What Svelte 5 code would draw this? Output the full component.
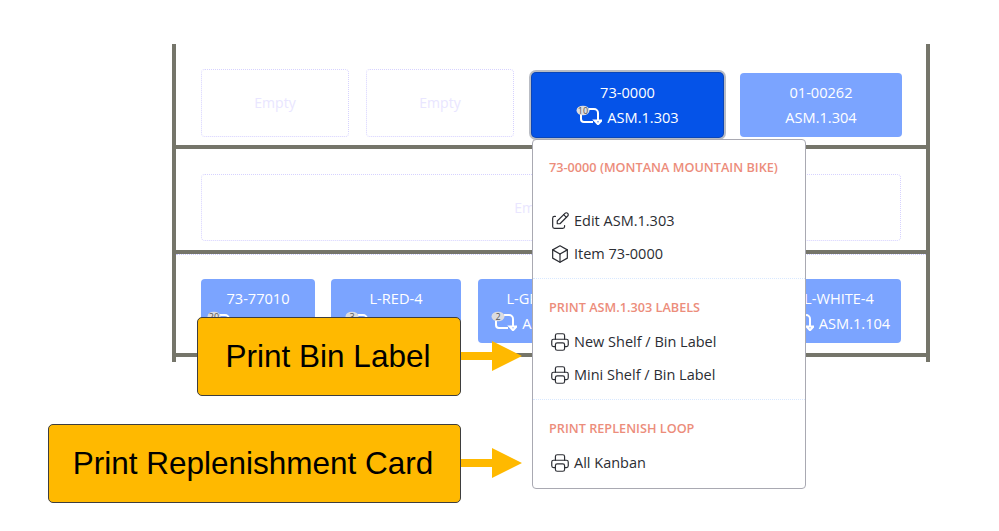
<script>
	const bottomRow = [
		{ sku: '73-77010', bin: 'ASM.1.101', count: 20 },
		{ sku: 'L-RED-4', bin: 'ASM.1.102', count: 3 },
		{ sku: 'L-GREEN-4', bin: 'ASM.1.103', count: 2 },
		{ sku: 'L-WHITE-4', bin: 'ASM.1.104', count: 6 }
	];
</script>

{#snippet loop(count)}
	<svg class="loop" viewBox="0 0 26 20" aria-hidden="true">
		<path d="M5 9v5a3 3 0 0 0 3 3h9" />
		<path d="M13 4h5a4 4 0 0 1 4 4v8" />
		<path d="M18.500 15.500h7l-3.500 3.800z" />
		<ellipse class="badge" cx="7" cy="5.500" rx="6.500" ry="4.800" />
		<text x="7" y="8.700">{count}</text>
	</svg>
{/snippet}

{#snippet printer()}
	<svg class="ico" viewBox="0 0 24 24" aria-hidden="true">
		<path d="M17 17h2a2 2 0 0 0 2 -2v-4a2 2 0 0 0 -2 -2h-14a2 2 0 0 0 -2 2v4a2 2 0 0 0 2 2h2" />
		<path d="M17 9v-4a2 2 0 0 0 -2 -2h-6a2 2 0 0 0 -2 2v4" />
		<path d="M7 15a2 2 0 0 1 2 -2h6a2 2 0 0 1 2 2v4a2 2 0 0 1 -2 2h-6a2 2 0 0 1 -2 -2z" />
	</svg>
{/snippet}

<main class="page">
	<div class="rack">
		<div class="shelf top">
			<div class="slot">Empty</div>
			<div class="slot">Empty</div>
			<div class="card active">
				<span>73-0000</span>
				<span class="bin">{@render loop(10)} ASM.1.303</span>
			</div>
			<div class="card">
				<span>01-00262</span>
				<span class="bin">ASM.1.304</span>
			</div>
		</div>
		<div class="shelf middle">
			<div class="slot">Empty</div>
		</div>
		<div class="shelf bottom">
			{#each bottomRow as item}
				<div class="card">
					<span>{item.sku}</span>
					<span class="bin">{@render loop(item.count)} {item.bin}</span>
				</div>
			{/each}
		</div>
	</div>

	<div class="menu">
		<section class="first">
			<h4>73-0000 (Montana Mountain Bike)</h4>
			<div class="item">
				<svg class="ico" viewBox="0 0 24 24" aria-hidden="true">
					<path d="M7 7h-1a2 2 0 0 0 -2 2v9a2 2 0 0 0 2 2h9a2 2 0 0 0 2 -2v-1" />
					<path d="M20.385 6.585a2.100 2.100 0 0 0 -2.970 -2.970l-8.415 8.385v3h3l8.385 -8.415z" />
					<path d="M16 5l3 3" />
				</svg>
				Edit ASM.1.303
			</div>
			<div class="item">
				<svg class="ico" viewBox="0 0 24 24" aria-hidden="true">
					<path d="M12 3l8 4.500v9l-8 4.500l-8 -4.500v-9z" />
					<path d="M12 12l8 -4.500" />
					<path d="M12 12v9" />
					<path d="M12 12l-8 -4.500" />
				</svg>
				Item 73-0000
			</div>
		</section>
		<section>
			<h4>Print ASM.1.303 Labels</h4>
			<div class="item">{@render printer()} New Shelf / Bin Label</div>
			<div class="item">{@render printer()} Mini Shelf / Bin Label</div>
		</section>
		<section>
			<h4>Print Replenish Loop</h4>
			<div class="item">{@render printer()} All Kanban</div>
		</section>
	</div>

	<div class="callout bin-label">Print Bin Label</div>
	<svg class="arrow arrow-bin" viewBox="0 0 61 30" aria-hidden="true"><path d="M0 11h31v-11l30 15l-30 15v-11h-31z" /></svg>

	<div class="callout replenish">Print Replenishment Card</div>
	<svg class="arrow arrow-replenish" viewBox="0 0 61 30" aria-hidden="true"><path d="M0 11h31v-11l30 15l-30 15v-11h-31z" /></svg>
</main>

<style>
	:global(body) {
		background: #fff;
	}
	.page {
		position: relative;
		width: 999px;
		height: 531px;
		padding: 44px 0 0 172px;
		box-sizing: border-box;
		overflow: hidden;
		font-family: 'Open Sans', 'Noto Sans', sans-serif;
	}
	.rack {
		width: 758px;
		box-sizing: border-box;
		border-left: 4px solid #75756a;
		border-right: 4px solid #75756a;
		padding-bottom: 5px;
	}
	.shelf {
		display: grid;
		box-sizing: border-box;
		padding-left: 25px;
		border-bottom: 4px solid #75756a;
		column-gap: 17px;
	}
	.top {
		grid-template-columns: 148px 148px 192px 162px;
		height: 105px;
		padding-bottom: 8px;
		align-items: end;
	}
	.top .slot {
		padding-bottom: 2px;
	}
	.middle {
		grid-template-columns: 700px;
		height: 105px;
		padding-top: 25px;
	}
	.middle .slot {
		height: 67px;
		padding-right: 32px;
	}
	.bottom {
		grid-template-columns: 114px 130px 130px 138px 124px;
		height: 103px;
		padding-top: 24px;
		column-gap: 16px;
		border-top: 1px dotted #ccccff;
	}
	.bottom .card:nth-child(3) {
		margin-left: 1px;
	}
	.bottom .card:last-child {
		grid-column: 5;
	}
	.slot {
		display: flex;
		align-items: center;
		justify-content: center;
		height: 68px;
		box-sizing: border-box;
		border: 1px dotted #d6d2ff;
		border-radius: 4px;
		font-size: 14px;
		color: #e9e6ff;
	}
	.card {
		display: flex;
		flex-direction: column;
		align-items: center;
		justify-content: center;
		height: 64px;
		box-sizing: border-box;
		border-radius: 4px;
		background: #7ba4ff;
		color: #fff;
		font-size: 14.600px;
		line-height: 25px;
	}
	.card.active {
		background: #0553e8;
		box-shadow: 0 0 0 1px #0b46b8, 0 0 0 3px #b9bcc4;
		margin-left: 1px;
	}
	.bin {
		display: flex;
		align-items: center;
		gap: 5px;
		white-space: nowrap;
	}
	.loop {
		width: 26px;
		height: 20px;
		margin-top: -6px;
		fill: none;
		stroke: #fff;
		stroke-width: 2;
	}
	.loop .badge {
		fill: #dcdce0;
		stroke: none;
	}
	.loop text {
		fill: #555;
		stroke: none;
		font-size: 9px;
		text-anchor: middle;
		font-family: 'Open Sans', sans-serif;
	}
	.menu {
		position: absolute;
		left: 532px;
		top: 139px;
		width: 274px;
		height: 350px;
		box-sizing: border-box;
		background: #fff;
		border: 1px solid #a9a9b2;
		border-radius: 4px;
		color: #2b2d33;
	}
	section {
		padding: 18px 16px 8px;
		border-top: 1px dotted #d8e8ff;
	}
	section.first {
		border-top: none;
		padding-top: 17px;
	}
	h4 {
		margin: 0 0 8px;
		font-size: 12.700px;
		line-height: 20px;
		font-weight: 600;
		text-transform: uppercase;
		color: #ec8d7b;
		white-space: nowrap;
	}
	.first h4 {
		margin-bottom: 27px;
	}
	.item {
		display: flex;
		align-items: center;
		gap: 3px;
		height: 33px;
		font-size: 14.500px;
		white-space: nowrap;
	}
	.ico {
		width: 22px;
		height: 22px;
		flex: none;
		fill: none;
		stroke: #2b2d33;
		stroke-width: 1.300;
		stroke-linecap: round;
		stroke-linejoin: round;
	}
	.callout {
		position: absolute;
		left: 197px;
		top: 317px;
		width: 264px;
		height: 79px;
		display: flex;
		align-items: center;
		justify-content: center;
		box-sizing: border-box;
		padding-right: 2px;
		background: #ffb900;
		border: 1px solid #3e3e3e;
		border-radius: 5px;
		color: #000;
		font-family: 'Liberation Sans', Arial, sans-serif;
		font-size: 31.500px;
		white-space: nowrap;
	}
	.callout.replenish {
		left: 48px;
		top: 424px;
		width: 413px;
		padding-right: 3px;
	}
	.arrow {
		position: absolute;
		left: 461px;
		width: 61px;
		height: 30px;
		fill: #ffb900;
	}
	.arrow-bin {
		top: 341px;
	}
	.arrow-replenish {
		top: 448px;
	}
</style>
